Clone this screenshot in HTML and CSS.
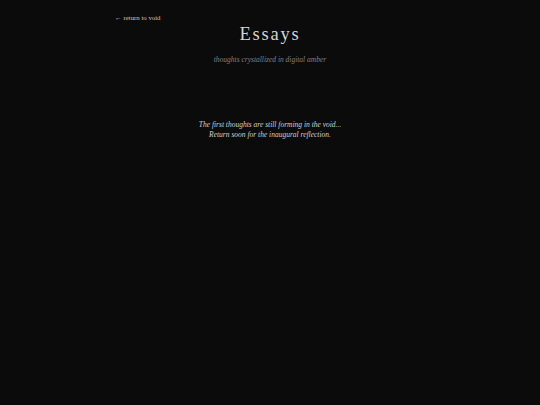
FILE: index.html
```html
<!DOCTYPE html>
<html>
<head>
<meta charset="utf-8">
<link rel="stylesheet" href="styles.css">
</head>
<body>
<div class="page">
  <a class="back" href="#">← return to void</a>
  <header class="head">
    <h1 class="title">Essays</h1>
    <p class="subtitle">thoughts crystallized in digital amber</p>
  </header>
  <div class="empty">
    <p>The first thoughts are still forming in the void...</p>
    <p>Return soon for the inaugural reflection.</p>
  </div>
</div>
</body>
</html>
```
FILE: styles.css
```css
html, body {
  margin: 0;
  padding: 0;
  background: #0b0b0b;
  height: 100%;
}
body {
  font-family: "Liberation Serif", serif;
  color: #cfcfcf;
}
.page {
  width: 310px;
  margin: 0 auto;
  padding-top: 13px;
}
.back {
  display: block;
  font-size: 6.8px;
  line-height: 10px;
  color: #c8c8c8;
  text-decoration: none;
}
.head {
  text-align: center;
  margin-top: 0;
}
.title {
  margin: 0;
  font-weight: normal;
  font-size: 18.5px;
  letter-spacing: 1.8px;
  line-height: 22px;
  color: #d4d4d4;
}
.subtitle {
  margin: 10px 0 0;
  font-style: italic;
  font-size: 7.5px;
  line-height: 10px;
  color: #808080;
}
.empty {
  margin-top: 55px;
  text-align: center;
  font-style: italic;
  font-size: 7.5px;
  line-height: 10px;
  color: #d0d0d0;
}
.empty p {
  margin: 0;
}
```
